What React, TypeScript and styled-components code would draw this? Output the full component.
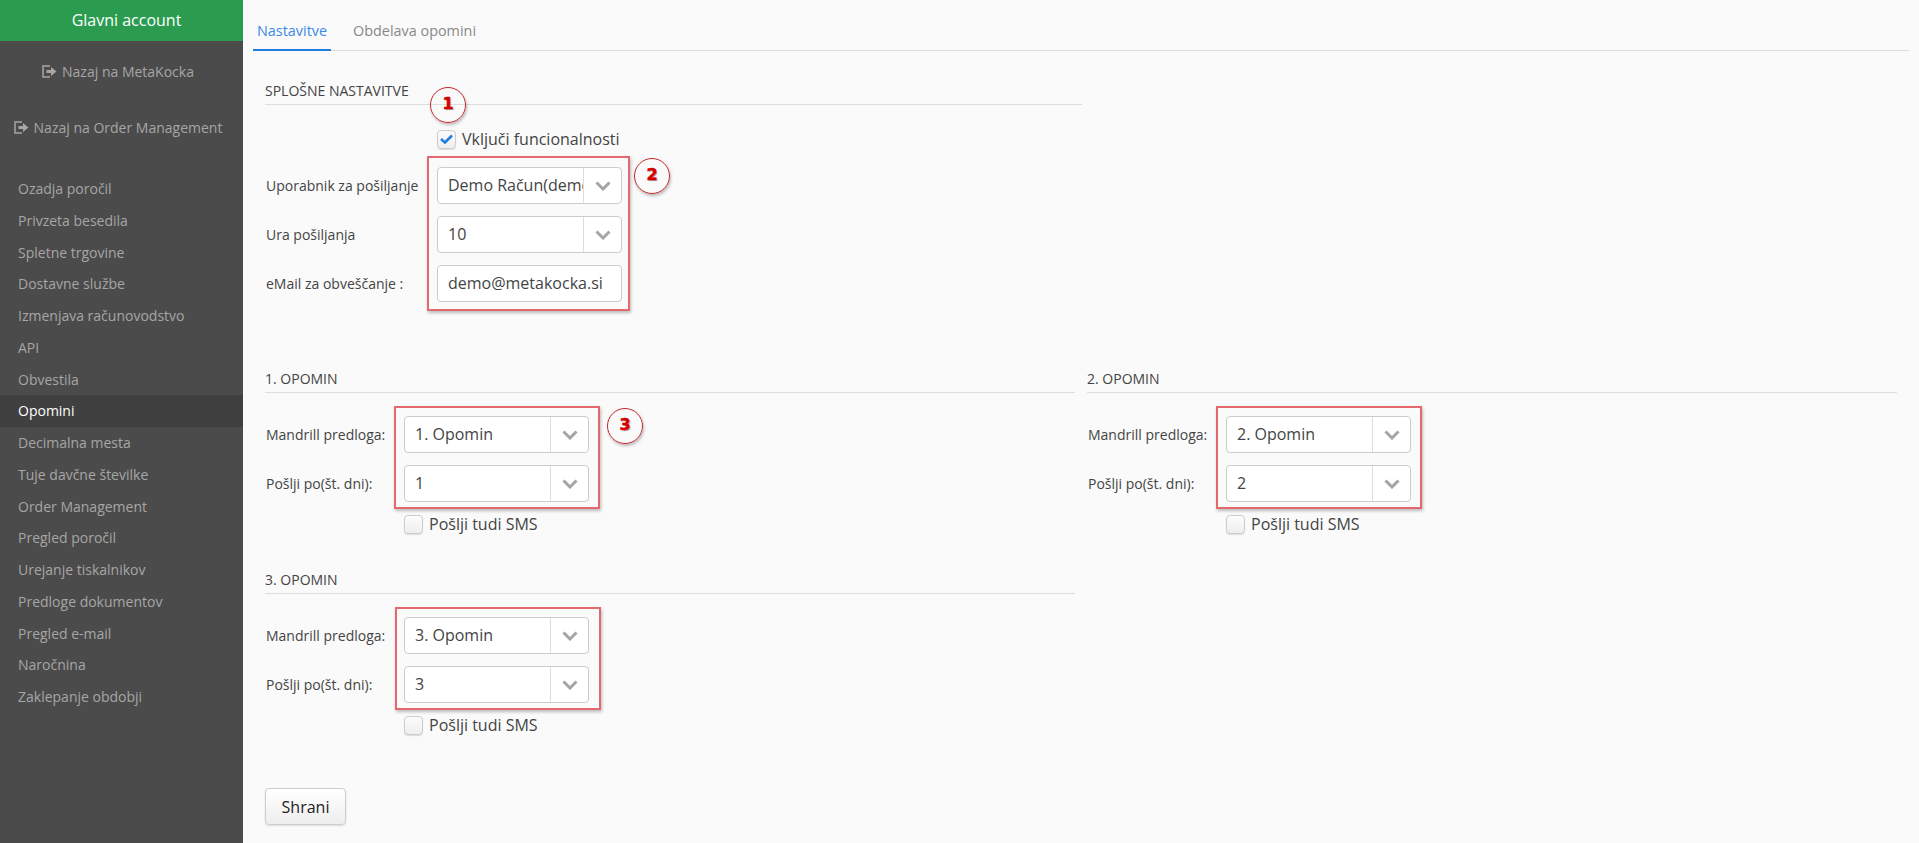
import React from "react";
import styled, { createGlobalStyle } from "styled-components";

const GlobalStyle = createGlobalStyle`
  html, body {
    margin: 0;
    padding: 0;
    height: 100%;
    background: #fafafa;
    font-family: "Open Sans", "Noto Sans", sans-serif;
    color: #444;
  }
  * { box-sizing: border-box; }
`;

const Layout = styled.div`
  display: flex;
  width: 1919px;
  height: 843px;
  overflow: hidden;
  background: #fafafa;
`;

const Sidebar = styled.aside`
  width: 243px;
  flex-shrink: 0;
  background: #4b4b4b;
`;

const AccountHeader = styled.div`
  height: 41px;
  background: #2b9c4f;
  color: #fff;
  font-size: 16px;
  line-height: 41px;
  text-align: center;
  padding-left: 10px;
`;

const BackLinks = styled.div`
  padding-top: 2px;
`;

const BackLink = styled.a`
  display: flex;
  align-items: center;
  justify-content: center;
  gap: 5px;
  height: 56px;
  padding-right: 7px;
  color: #a6a6a6;
  font-size: 14px;
`;

const Menu = styled.nav`
  margin-top: 18px;
`;

const MenuItem = styled.a<{ $active?: boolean }>`
  display: block;
  height: 31.75px;
  line-height: 31.75px;
  padding-left: 18px;
  font-size: 14px;
  color: ${(p) => (p.$active ? "#fff" : "#a6a6a6")};
  background: ${(p) => (p.$active ? "#404040" : "transparent")};
`;

const Main = styled.main`
  flex: 1;
  padding: 0 10px;
`;

const Tabs = styled.div`
  display: flex;
  height: 51px;
  padding-top: 18px;
  border-bottom: 1px solid #ddd;
`;

const Tab = styled.div<{ $active?: boolean }>`
  height: 33px;
  padding: 3px 4px 0;
  margin-right: 18px;
  font-size: 14.4px;
  color: ${(p) => (p.$active ? "#3b8ae6" : "#888")};
  border-bottom: ${(p) => (p.$active ? "2px solid #1e7fe0" : "none")};
`;

const Content = styled.div`
  padding-left: 12px;
`;

const GeneralSection = styled.section`
  width: 817px;
  padding-top: 30px;
`;

const SectionTitle = styled.h4`
  margin: 0;
  height: 24px;
  font-size: 14px;
  line-height: 19px;
  font-weight: 400;
  color: #444;
  border-bottom: 1px solid #ddd;
`;

const CheckRow = styled.label<{ $offset: number; $gap: number }>`
  display: flex;
  align-items: center;
  gap: 6px;
  height: 20px;
  margin-top: ${(p) => p.$gap}px;
  padding-left: ${(p) => p.$offset}px;
  font-size: 16px;
  color: #444;
`;

const Box = styled.span`
  display: flex;
  align-items: center;
  justify-content: center;
  width: 19px;
  height: 19px;
  background: linear-gradient(#fcfcfc, #eee);
  border: 1px solid #ccc;
  border-radius: 4px;
  box-shadow: 0 1px 1px rgba(0, 0, 0, 0.12);
`;

const Fields = styled.div<{ $labelWidth: number; $gap?: number }>`
  position: relative;
  display: grid;
  grid-template-columns: ${(p) => p.$labelWidth}px 185px;
  row-gap: 12px;
  width: max-content;
  margin-top: ${(p) => p.$gap ?? 0}px;
  padding-left: 1px;
  align-items: center;
`;

const FieldLabel = styled.label`
  font-size: 14px;
  color: #444;
`;

const SelectBox = styled.div`
  display: flex;
  height: 37px;
  background: #fff;
  border: 1px solid #ccc;
  border-radius: 4px;
  overflow: hidden;
`;

const SelectValue = styled.div`
  flex: 1;
  min-width: 0;
  padding-left: 10px;
  font-size: 16px;
  line-height: 35px;
  color: #444;
  white-space: nowrap;
  overflow: hidden;
`;

const SelectArrow = styled.div`
  width: 38px;
  flex-shrink: 0;
  display: flex;
  align-items: center;
  justify-content: center;
  border-left: 1px solid #ddd;
`;

const TextValue = styled.div`
  height: 37px;
  padding-left: 10px;
  font-size: 16px;
  line-height: 35px;
  color: #444;
  background: #fff;
  border: 1px solid #ccc;
  border-radius: 4px;
`;

const RedFrame = styled.div<{ $left: number; $top: number; $width: number; $height: number }>`
  position: absolute;
  left: ${(p) => p.$left}px;
  top: ${(p) => p.$top}px;
  width: ${(p) => p.$width}px;
  height: ${(p) => p.$height}px;
  border: 2px solid #e4696e;
  box-shadow: 1px 2px 3px rgba(0, 0, 0, 0.25);
  pointer-events: none;
`;

const Badge = styled.div<{ $left: number; $top: number }>`
  position: absolute;
  left: ${(p) => p.$left}px;
  top: ${(p) => p.$top}px;
  width: 36px;
  height: 36px;
  border-radius: 50%;
  border: 1.5px solid #c8242b;
  box-shadow: 1px 2px 3px rgba(0, 0, 0, 0.25);
  color: #d40000;
  font-family: "DejaVu Sans", "Liberation Sans", sans-serif;
  font-weight: 700;
  font-size: 16px;
  line-height: 32px;
  text-align: center;
  -webkit-text-stroke: 0.5px #d40000;
  text-shadow: 1px 1px 1px rgba(0, 0, 0, 0.35);
`;

const GeneralFields = styled.div`
  position: relative;
  padding-top: 5px;
`;

const ReminderGrid = styled.div`
  display: grid;
  grid-template-columns: 810px 810px;
  column-gap: 12px;
  margin-top: 67px;
`;

const Reminder = styled.section`
  height: 201px;
`;

const ReminderBody = styled.div`
  padding-top: 23px;
`;

const SaveButton = styled.button`
  display: block;
  width: 81px;
  height: 37px;
  margin-top: 17px;
  background: linear-gradient(#fff, #eee);
  border: 1px solid #ccc;
  border-radius: 4px;
  box-shadow: 0 1px 2px rgba(0, 0, 0, 0.12);
  font-family: inherit;
  font-size: 16px;
  color: #222;
`;

const Chevron = () => (
  <svg width="16" height="10" viewBox="0 0 16 10">
    <path d="M1.5 1.5 L8 8 L14.5 1.5" fill="none" stroke="#a5a5a5" strokeWidth="3" />
  </svg>
);

const Tick = () => (
  <svg width="13" height="10" viewBox="0 0 13 10">
    <path d="M1 5 L5 8.5 L12 1.5" fill="none" stroke="#1e7fe0" strokeWidth="2.6" />
  </svg>
);

const LogOutIcon = () => (
  <svg width="15" height="13" viewBox="0 0 15 13">
    <path d="M8 1 H1 V12 H8" fill="none" stroke="#a6a6a6" strokeWidth="1.5" />
    <path d="M4.5 5 H9 V2 L14.5 6.5 L9 11 V8 H4.5 Z" fill="#a6a6a6" />
  </svg>
);

const menuItems = [
  "Ozadja poročil",
  "Privzeta besedila",
  "Spletne trgovine",
  "Dostavne službe",
  "Izmenjava računovodstvo",
  "API",
  "Obvestila",
  "Opomini",
  "Decimalna mesta",
  "Tuje davčne številke",
  "Order Management",
  "Pregled poročil",
  "Urejanje tiskalnikov",
  "Predloge dokumentov",
  "Pregled e-mail",
  "Naročnina",
  "Zaklepanje obdobji",
];

const Select = ({ value }: { value: string }) => (
  <SelectBox>
    <SelectValue>{value}</SelectValue>
    <SelectArrow>
      <Chevron />
    </SelectArrow>
  </SelectBox>
);

const ReminderBlock = ({ n, badge }: { n: number; badge?: boolean }) => (
  <Reminder>
    <SectionTitle>{n}. OPOMIN</SectionTitle>
    <ReminderBody>
      <Fields $labelWidth={138}>
        <FieldLabel>Mandrill predloga:</FieldLabel>
        <Select value={`${n}. Opomin`} />
        <FieldLabel>Pošlji po(št. dni):</FieldLabel>
        <Select value={String(n)} />
        <RedFrame $left={n === 3 ? 130 : 129} $top={-10} $width={206} $height={103} />
        {badge && <Badge $left={342} $top={-8}>3</Badge>}
      </Fields>
      <CheckRow $offset={139} $gap={12}>
        <Box />
        Pošlji tudi SMS
      </CheckRow>
    </ReminderBody>
  </Reminder>
);

export default function App() {
  return (
    <Layout>
      <GlobalStyle />
      <Sidebar>
        <AccountHeader>Glavni account</AccountHeader>
        <BackLinks>
          <BackLink>
            <LogOutIcon />
            Nazaj na MetaKocka
          </BackLink>
          <BackLink>
            <LogOutIcon />
            Nazaj na Order Management
          </BackLink>
        </BackLinks>
        <Menu>
          {menuItems.map((item) => (
            <MenuItem key={item} $active={item === "Opomini"}>
              {item}
            </MenuItem>
          ))}
        </Menu>
      </Sidebar>
      <Main>
        <Tabs>
          <Tab $active>Nastavitve</Tab>
          <Tab>Obdelava opomini</Tab>
        </Tabs>
        <Content>
          <GeneralSection>
            <SectionTitle>SPLOŠNE NASTAVITVE</SectionTitle>
            <GeneralFields>
              <Badge $left={165} $top={-18}>1</Badge>
              <CheckRow $offset={172} $gap={19}>
                <Box>
                  <Tick />
                </Box>
                Vključi funcionalnosti
              </CheckRow>
              <Fields $labelWidth={171} $gap={18}>
                <FieldLabel>Uporabnik za pošiljanje</FieldLabel>
                <Select value="Demo Račun(demo@metakocka.si)" />
                <FieldLabel>Ura pošiljanja</FieldLabel>
                <Select value="10" />
                <FieldLabel>eMail za obveščanje :</FieldLabel>
                <TextValue>demo@metakocka.si</TextValue>
                <RedFrame $left={162} $top={-11} $width={203} $height={155} />
                <Badge $left={369} $top={-9}>2</Badge>
              </Fields>
            </GeneralFields>
          </GeneralSection>
          <ReminderGrid>
            <ReminderBlock n={1} badge />
            <ReminderBlock n={2} />
            <ReminderBlock n={3} />
          </ReminderGrid>
          <SaveButton>Shrani</SaveButton>
        </Content>
      </Main>
    </Layout>
  );
}
